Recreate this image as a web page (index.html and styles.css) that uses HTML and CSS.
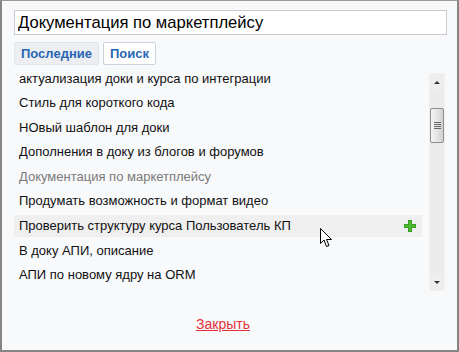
FILE: index.html
```html
<!doctype html>
<html lang="ru">
<head>
    <meta charset="UTF-8">
    <title>Документация</title>
    <link rel="stylesheet" href="styles.css">
</head>
<body>

<div class="dialog">
    <input class="title-input" type="text" value="Документация по маркетплейсу">

    <div class="tabs">
        <span class="tab active">Последние</span>
        <span class="tab">Поиск</span>
    </div>

    <div class="list-box">
        <div class="items">
            <div class="item">актуализация доки и курса по интеграции</div>
            <div class="item">Стиль для короткого кода</div>
            <div class="item">НОвый шаблон для доки</div>
            <div class="item">Дополнения в доку из блогов и форумов</div>
            <div class="item current">Документация по маркетплейсу</div>
            <div class="item">Продумать возможность и формат видео</div>
            <div class="item hover">Проверить структуру курса Пользователь КП
                <svg class="plus" width="12" height="12" viewBox="0 0 12 12">
                    <path d="M4 0h4v4h4v4h-4v4h-4v-4h-4v-4h4z" fill="#39a021"/>
                    <path d="M5 1h2v4h4v2h-4v4h-2v-4h-4v-2h4z" fill="#4cbb2f"/>
                </svg>
            </div>
            <div class="item">В доку АПИ, описание</div>
            <div class="item">АПИ по новому ядру на ORM</div>
        </div>
        <div class="scrollbar">
            <div class="arrow up"></div>
            <div class="track-top"></div>
            <div class="thumb">
                <span></span><span></span><span></span><span></span>
            </div>
            <div class="track-rest"></div>
            <div class="arrow down"></div>
        </div>
    </div>

    <div class="footer">
        <a href="#" class="close">Закрыть</a>
    </div>

    <!-- mouse pointer over the hovered row -->
    <svg class="cursor" width="14" height="20" viewBox="0 0 14 20">
        <path d="M0.5 0.5 L0.5 15.5 L4 12 L6.5 18.5 L9 17.5 L6.5 11.5 L11.5 11.5 Z"
              fill="#fff" stroke="#000" stroke-width="1"/>
    </svg>
</div>

</body>
</html>
```

FILE: styles.css
```css
body {
    margin: 0;
    background: #fff;
    font-family: "Liberation Sans", Arial, sans-serif;
}

.dialog {
    position: relative;
    box-sizing: border-box;
    width: 459px;
    height: 352px;
    border: 2px solid #858585;
    border-top: 1px solid #9a9a9a;
    background: #f8f9fb;
    padding: 9px 10px 0 12px;
}

.title-input {
    display: block;
    box-sizing: border-box;
    width: 433px;
    height: 25px;
    margin: 0;
    padding: 0 3px;
    border: 1px solid #c9cbcf;
    background: #fff;
    font-family: "Liberation Sans", Arial, sans-serif;
    font-size: 16.6px;
    color: #000;
    outline: none;
}

.tabs {
    display: flex;
    gap: 4px;
    margin-top: 7px;
}

.tab {
    box-sizing: border-box;
    height: 23px;
    line-height: 21px;
    padding: 0 6px;
    border: 1px solid #ccd3de;
    border-radius: 2px;
    background: #fff;
    color: #2866b4;
    font-weight: bold;
    font-size: 13px;
}

.tab.active {
    background: #eceef1;
    border-color: #e2e4e8;
}

.list-box {
    display: flex;
    gap: 7px;
    height: 225px;
    margin-top: 2px;
}

.items {
    width: 408px;
    overflow: hidden;
}

.item {
    display: flex;
    align-items: center;
    justify-content: space-between;
    height: 22px;
    margin-bottom: 2.6px;
    padding: 0 6px 0 5px;
    font-size: 13px;
    color: #111;
}

.item.current {
    color: #7a7a7a;
}

.item.hover {
    background: #efefef;
}

.scrollbar {
    display: flex;
    flex-direction: column;
    box-sizing: border-box;
    width: 16px;
    height: 218px;
    margin-top: 6px;
    border: 1px solid #f0f0f0;
    background: #ebebeb;
}

.arrow {
    height: 16px;
    display: flex;
    align-items: center;
    justify-content: center;
    background: #eeeeee;
}

.arrow::after {
    content: "";
    border-left: 3px solid transparent;
    border-right: 3px solid transparent;
}

.arrow.up::after {
    border-bottom: 3px solid #333;
}

.arrow.down::after {
    border-top: 3px solid #333;
}

.track-top {
    height: 18px;
}

.thumb {
    box-sizing: border-box;
    height: 35px;
    border: 1px solid #8e8e8e;
    border-radius: 2px;
    background: linear-gradient(to right, #f4f4f4, #e2e2e2 60%, #cfcfcf);
    display: flex;
    flex-direction: column;
    align-items: center;
    justify-content: center;
    gap: 1px;
}

.thumb span {
    width: 7px;
    height: 1px;
    background: #666;
}

.track-rest {
    flex: 1;
}

.footer {
    text-align: center;
    padding-right: 15px;
    margin-top: 23px;
}

.close {
    color: #e0333a;
    font-size: 14px;
    text-decoration: underline;
}

.cursor {
    position: absolute;
    left: 318px;
    top: 227px;
}
```
